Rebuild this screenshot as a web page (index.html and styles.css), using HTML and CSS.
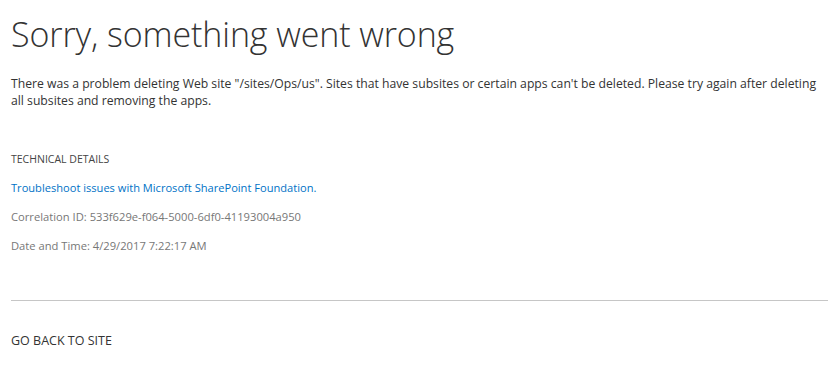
FILE: index.html
```html
<!DOCTYPE html>
<html lang="en">
<head>
<meta charset="utf-8">
<title>Error</title>
<link rel="stylesheet" href="styles.css">
</head>
<body>
<div class="page">
  <h1 class="title">Sorry, something went wrong</h1>
  <p class="message">There was a problem deleting Web site "/sites/Ops/us". Sites that have subsites or certain apps can't be deleted. Please try again after deleting all subsites and removing the apps.</p>
  <div class="details">
    <div class="details-head">TECHNICAL DETAILS</div>
    <a class="details-link" href="#">Troubleshoot issues with Microsoft SharePoint Foundation.</a>
    <div class="details-row">Correlation ID: 533f629e-f064-5000-6df0-41193004a950</div>
    <div class="details-row">Date and Time: 4/29/2017 7:22:17 AM</div>
  </div>
  <hr class="divider">
  <a class="back" href="#">GO BACK TO SITE</a>
</div>
</body>
</html>
```

FILE: styles.css
```css
html, body {
  margin: 0;
  padding: 0;
  background: #fff;
}
body {
  font-family: "Open Sans", "Liberation Sans", sans-serif;
  color: #333;
}
.page {
  padding: 0 0 0 11px;
}
.title {
  margin: 0;
  padding-top: 10px;
  font-size: 34px;
  font-weight: 300;
  line-height: 48px;
  color: #333;
  letter-spacing: -0.1px;
}
.message {
  margin: 17px 0 0 0;
  font-size: 12.2px;
  line-height: 17px;
  color: #333;
}
.details {
  margin-top: 43px;
  display: flex;
  flex-direction: column;
  align-items: flex-start;
}
.details-head {
  font-size: 10.5px;
  line-height: 14px;
  color: #444;
}
.details-link {
  margin-top: 14px;
  font-size: 11.1px;
  line-height: 16px;
  color: #0072c6;
  text-decoration: none;
}
.details-row {
  margin-top: 13px;
  font-size: 11.2px;
  line-height: 16px;
  color: #777;
}
.divider {
  margin: 46px 0 0 0;
  border: 0;
  border-top: 1px solid #c6c6c6;
  height: 0;
}
.back {
  display: block;
  margin-top: 32px;
  font-size: 12.5px;
  line-height: 16px;
  color: #333;
  text-decoration: none;
}
```
